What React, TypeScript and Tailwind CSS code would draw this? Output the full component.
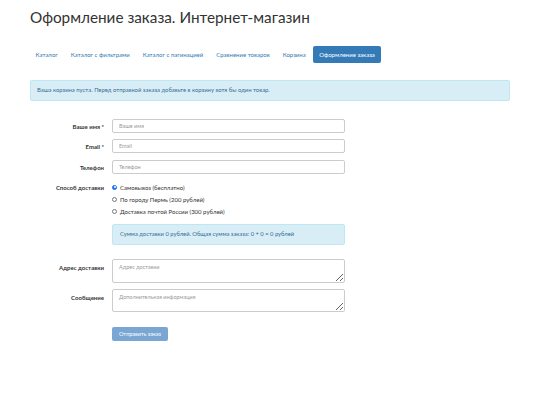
const navItems = [
  "Каталог",
  "Каталог с фильтрами",
  "Каталог с пагинацией",
  "Сравнение товаров",
  "Корзина",
];

function Field({ label, children }: { label: string; children: React.ReactNode }) {
  return (
    <div className="flex items-center gap-[8px]">
      <label className="w-[74px] shrink-0 text-right text-[6px] font-bold text-[#333]">{label}</label>
      {children}
    </div>
  );
}

function Radio({ label, checked }: { label: string; checked?: boolean }) {
  return (
    <div className="flex h-[12px] items-center gap-[3px] text-[6px] text-[#333]">
      <span
        className={`flex h-[5px] w-[5px] items-center justify-center rounded-full border ${
          checked ? "border-[#1a73e8] bg-[#1a73e8]" : "border-[#777] bg-white"
        }`}
      >
        {checked && <span className="h-[2px] w-[2px] rounded-full bg-white" />}
      </span>
      <span>{label}</span>
    </div>
  );
}

export default function App() {
  return (
    <div
      className="min-h-[405px] w-[540px] bg-white px-[30px] pt-[7px]"
      style={{ fontFamily: 'Lato, "Open Sans", sans-serif' }}
    >
      <h1 className="text-[15.3px] leading-[20px] font-normal text-[#333]">
        Оформление заказа. Интернет-магазин
      </h1>

      {/* Nav pills */}
      <div className="mt-[19px] flex gap-[2px] text-[6px]">
        {navItems.map((item) => (
          <span key={item} className="flex h-[17px] items-center rounded-[2px] px-[5.5px] text-[#337ab7]">
            {item}
          </span>
        ))}
        <span className="flex h-[17px] items-center rounded-[2px] bg-[#337ab7] px-[6px] text-white">
          Оформление заказа
        </span>
      </div>

      {/* Alert */}
      <div className="mt-[17px] flex h-[21px] items-center rounded-[2px] border border-[#bce8f1] bg-[#d9edf7] px-[6px] text-[5.9px] text-[#31708f]">
        Ваша корзина пуста. Перед отправкой заказа добавьте в корзину хотя бы один товар.
      </div>

      {/* Form */}
      <div className="mt-[18px] flex flex-col">
        <Field label="Ваше имя *">
          <input
            placeholder="Ваше имя"
            className="h-[14px] w-[233px] rounded-[2px] border border-[#ccc] px-[6px] text-[5.5px] placeholder:text-[#999]"
          />
        </Field>
        <div className="mt-[6px]">
          <Field label="Email *">
            <input
              placeholder="Email"
              className="h-[14px] w-[233px] rounded-[2px] border border-[#ccc] px-[6px] text-[5.5px] placeholder:text-[#999]"
            />
          </Field>
        </div>
        <div className="mt-[7px]">
          <Field label="Телефон">
            <input
              placeholder="Телефон"
              className="h-[14px] w-[233px] rounded-[2px] border border-[#ccc] px-[6px] text-[5.5px] placeholder:text-[#999]"
            />
          </Field>
        </div>

        <div className="mt-[7px] flex gap-[8px]">
          <label className="flex h-[12px] w-[74px] shrink-0 items-center justify-end text-[6px] font-bold text-[#333]">
            Способ доставки
          </label>
          <div className="flex w-[233px] flex-col">
            <Radio label="Самовывоз (бесплатно)" checked />
            <Radio label="По городу Пермь (200 рублей)" />
            <Radio label="Доставка почтой России (300 рублей)" />
            <div className="mt-[7px] flex h-[21px] items-center rounded-[2px] border border-[#bce8f1] bg-[#d9edf7] px-[7px] text-[5.8px] text-[#31708f]">
              Сумма доставки 0 рублей. Общая сумма заказа: 0 + 0 = 0 рублей
            </div>
          </div>
        </div>

        <div className="mt-[14px] flex gap-[8px]">
          <label className="w-[74px] shrink-0 pt-[4px] text-right text-[6px] font-bold text-[#333]">
            Адрес доставки
          </label>
          <textarea
            placeholder="Адрес доставки"
            className="h-[24px] w-[233px] rounded-[2px] border border-[#ccc] px-[6px] py-[3px] text-[5.5px] placeholder:text-[#999]"
          />
        </div>
        <div className="mt-[6px] flex gap-[8px]">
          <label className="w-[74px] shrink-0 pt-[4px] text-right text-[6px] font-bold text-[#333]">
            Сообщение
          </label>
          <textarea
            placeholder="Дополнительная информация"
            className="h-[23px] w-[233px] rounded-[2px] border border-[#ccc] px-[6px] py-[3px] text-[5.5px] placeholder:text-[#999]"
          />
        </div>

        <div className="mt-[15px] pl-[82px]">
          <button className="flex h-[14px] w-[56px] items-center justify-center rounded-[2px] bg-[#7aa6d3] text-[5.5px] text-white">
            Отправить заказ
          </button>
        </div>
      </div>
    </div>
  );
}
